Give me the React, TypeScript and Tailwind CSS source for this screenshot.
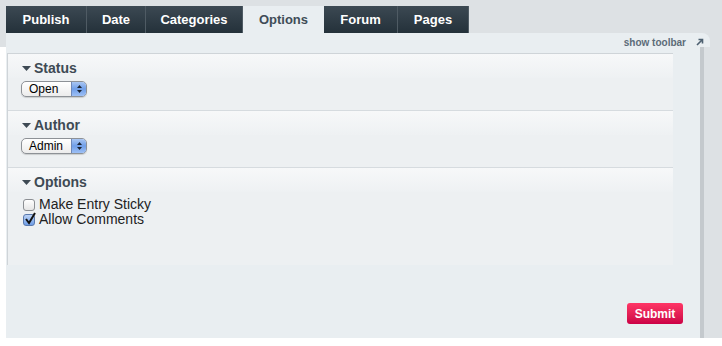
const tabs = [
  { label: 'Publish', w: 'w-[81px]' },
  { label: 'Date', w: 'w-[59px]' },
  { label: 'Categories', w: 'w-[97px]' },
  { label: 'Options', w: 'w-[81px]', active: true },
  { label: 'Forum', w: 'w-[74px]' },
  { label: 'Pages', w: 'w-[71px]' },
]

function Triangle() {
  return (
    <svg width="9" height="5" viewBox="0 0 9 5" className="mr-[3px]">
      <path d="M0 0h9L4.5 5z" fill="#3e4a54" />
    </svg>
  )
}

function SelectBox({ value, width }: { value: string; width: string }) {
  return (
    <div
      className={`flex h-[16px] ${width} items-stretch overflow-hidden rounded-[5px] border border-[#8d9196] bg-gradient-to-b from-white to-[#ececec] shadow-[0_1px_1px_rgba(0,0,0,0.15)]`}
    >
      <span className="flex-1 pl-[7px] text-[12px] leading-[14px] text-black">{value}</span>
      <span className="flex w-[15px] flex-col items-center justify-center gap-[2px] border-l border-[#6f88b8] bg-gradient-to-b from-[#a9c6f3] via-[#6f9ee8] to-[#9ec0f5]">
        <svg width="5" height="3" viewBox="0 0 5 3">
          <path d="M0 3h5L2.5 0z" fill="#1b2433" />
        </svg>
        <svg width="5" height="3" viewBox="0 0 5 3">
          <path d="M0 0h5L2.5 3z" fill="#1b2433" />
        </svg>
      </span>
    </div>
  )
}

function Checkbox({ checked }: { checked?: boolean }) {
  return (
    <span
      className={`relative mr-[4px] inline-block h-[12px] w-[12px] rounded-[3px] border ${
        checked
          ? 'border-[#5a79ad] bg-gradient-to-b from-[#bcd3f6] to-[#6e9de6]'
          : 'border-[#8c8f93] bg-gradient-to-b from-white to-[#e6e6e6]'
      }`}
    >
      {checked && (
        <svg width="13" height="13" viewBox="0 0 13 13" className="absolute -top-[3px] left-0">
          <path d="M2 7l3 4L11 1" fill="none" stroke="#111" strokeWidth="2" />
        </svg>
      )}
    </span>
  )
}

function Heading({ title }: { title: string }) {
  return (
    <div className="flex h-[24px] items-center bg-gradient-to-b from-[#f7f8f9] to-[#eef1f3] pl-[14px] pt-[4px]">
      <Triangle />
      <span className="text-[14px] font-bold text-[#3e4a54]">{title}</span>
    </div>
  )
}

export default function App() {
  return (
    <div className="h-[346px] w-[722px] bg-white font-['Liberation_Sans',Arial,sans-serif]">
      <div className="flex h-[33px] bg-[#dde1e4] pl-[6px] pt-[6px]">
        {tabs.map((t) => (
          <div
            key={t.label}
            className={`flex ${t.w} items-center justify-center text-[13px] font-bold ${
              t.active
                ? 'bg-[#e9eef1] text-[#3f4c57]'
                : 'border-r border-[#4f5b64] bg-gradient-to-b from-[#3c4953] to-[#24313a] text-white'
            }`}
          >
            {t.label}
          </div>
        ))}
      </div>
      <div className="flex h-[14px] bg-[#dde1e4] pl-[6px]">
        <div className="flex w-[704px] items-center justify-end rounded-tr-[8px] bg-[#e9eef1] pr-[6px] pt-[4px]">
          <span className="mr-[10px] text-[10px] font-bold text-[#5c6b78]">show toolbar</span>
          <svg width="8" height="8" viewBox="0 0 8 8">
            <path d="M1 7L6 2M2.5 1.5H6.5V5.5" fill="none" stroke="#4d6070" strokeWidth="1.6" />
          </svg>
        </div>
      </div>
      <div className="flex h-[291px]">
        <div className="ml-[6px] flex w-[694px] flex-col bg-[#e9eef1] pt-[6px]">
          <div className="ml-[1px] w-[666px] border-l border-t border-[#cfd4d8] bg-[#edf0f2]">
            <div className="h-[57px] border-b border-[#d6dbdf]">
              <Heading title="Status" />
              <div className="pl-[13px] pt-[3px]">
                <SelectBox value="Open" width="w-[66px]" />
              </div>
            </div>
            <div className="h-[57px] border-b border-[#d6dbdf]">
              <Heading title="Author" />
              <div className="pl-[13px] pt-[3px]">
                <SelectBox value="Admin" width="w-[66px]" />
              </div>
            </div>
            <div className="h-[97px]">
              <Heading title="Options" />
              <div className="pl-[15px] pt-[5px] text-[14px] leading-[15px] text-[#222]">
                <div className="flex items-center">
                  <Checkbox />
                  Make Entry Sticky
                </div>
                <div className="flex items-center">
                  <Checkbox checked />
                  Allow Comments
                </div>
              </div>
            </div>
          </div>
          <div className="mt-auto mb-[14px] flex justify-end pr-[17px]">
            <button className="h-[21px] w-[56px] rounded-[3px] bg-gradient-to-b from-[#ff3566] to-[#cc0046] text-[12px] font-bold text-white">
              Submit
            </button>
          </div>
        </div>
        <div className="w-[4px] bg-[#c4c9cd]" />
        <div className="flex-1 bg-[#dde1e4]" />
      </div>
    </div>
  )
}
